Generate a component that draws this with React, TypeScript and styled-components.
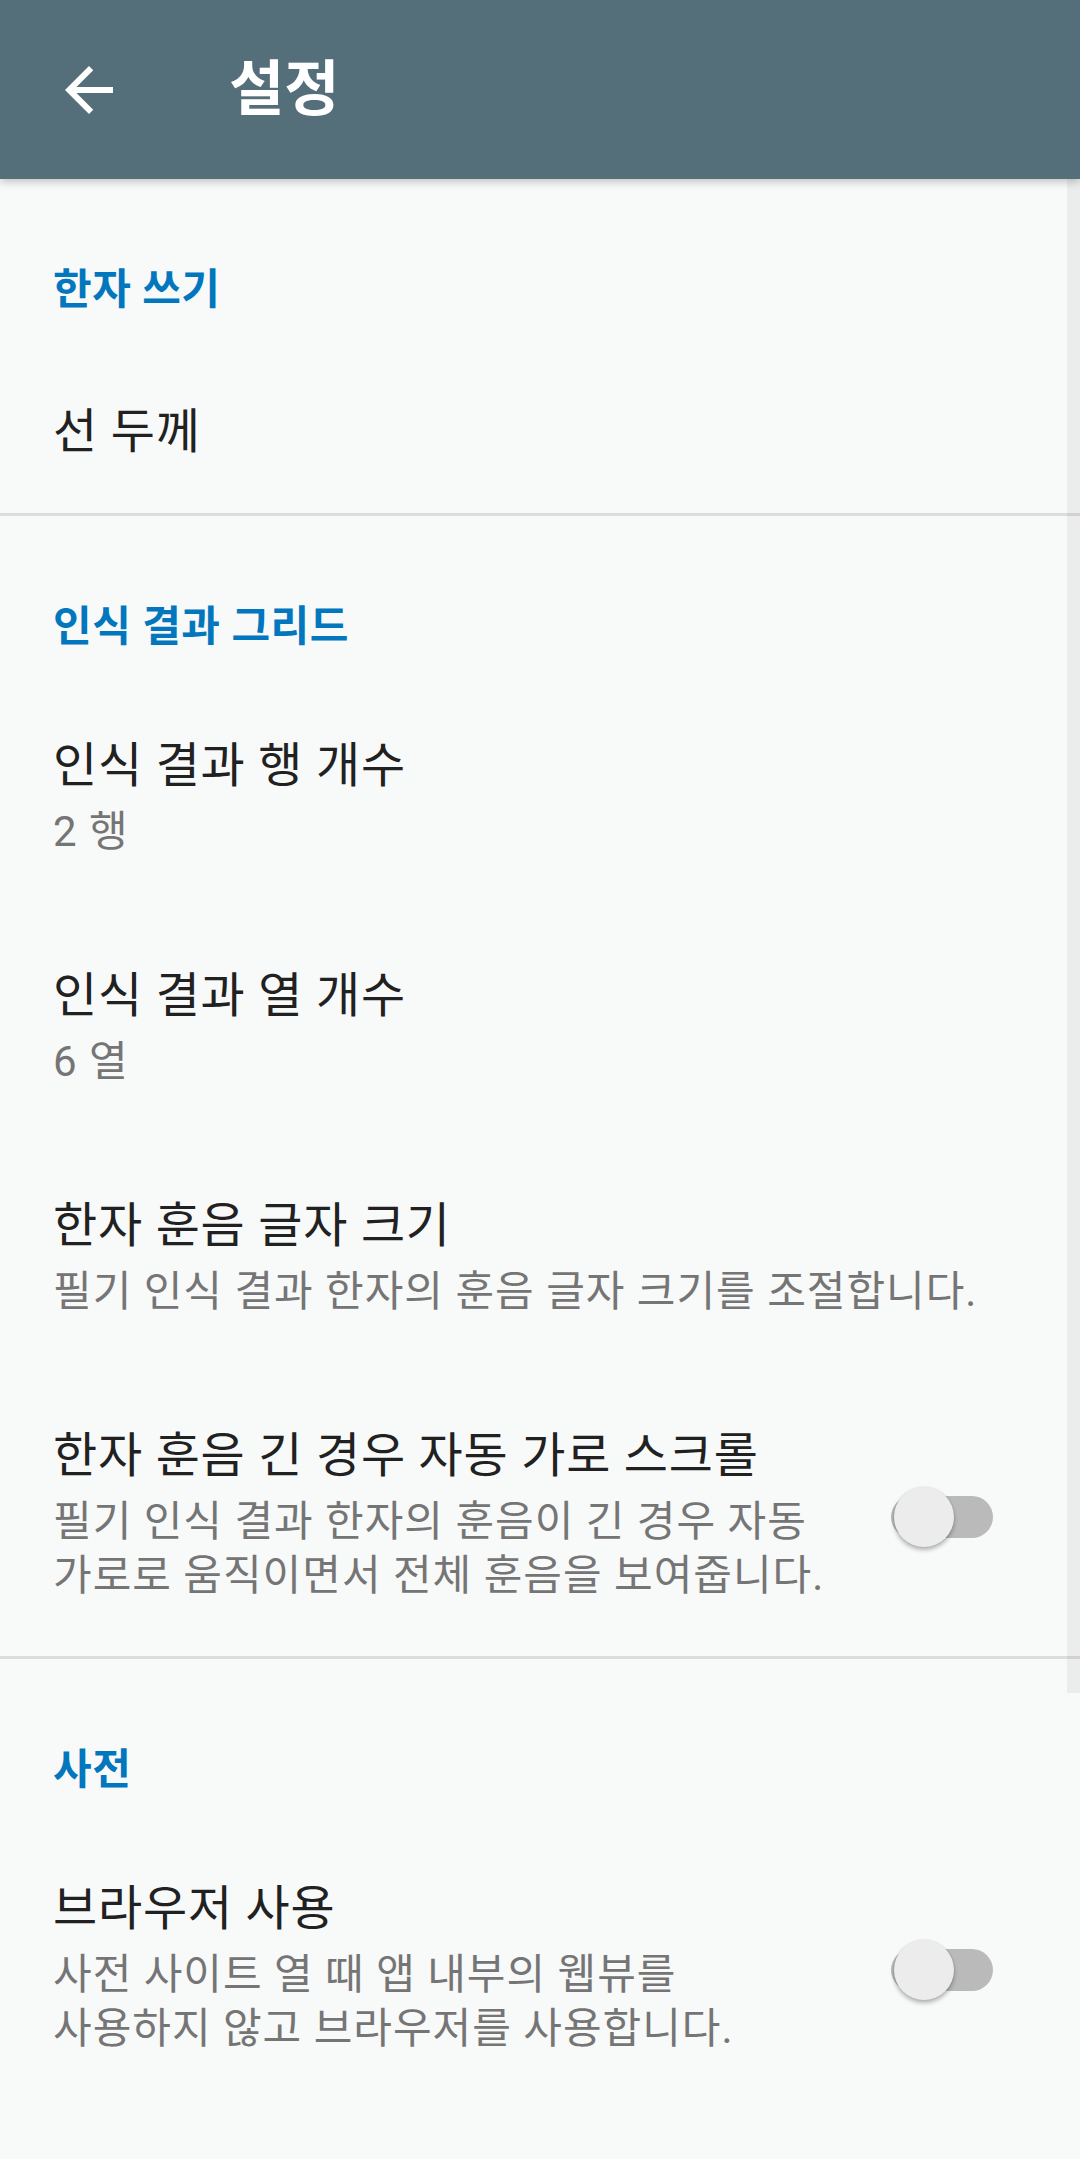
import React from "react";
import styled, { createGlobalStyle } from "styled-components";

const GlobalStyle = createGlobalStyle`
  html, body {
    margin: 0;
    padding: 0;
    background: #f8f9f9;
  }
  body {
    font-family: Roboto, "Noto Sans CJK KR", "Noto Sans", sans-serif;
    -webkit-font-smoothing: antialiased;
  }
  * { box-sizing: border-box; }
`;

const Page = styled.div`
  width: 1080px;
  min-height: 2159px;
  background: #f8f9f9;
  display: flex;
  flex-direction: column;
`;

const AppBar = styled.header`
  position: relative;
  z-index: 2;
  height: 179px;
  background: #546e7a;
  display: flex;
  align-items: center;
  padding-left: 53px;
  box-shadow: 0 3px 8px rgba(0, 0, 0, 0.22);
`;

const NavButton = styled.button`
  width: 72px;
  height: 72px;
  border: 0;
  padding: 0;
  background: transparent;
  display: flex;
  align-items: center;
  justify-content: center;
  color: #ffffff;
`;

const Title = styled.h1`
  margin: 0 0 0 104px;
  font-size: 60px;
  line-height: 72px;
  font-weight: 700;
  color: #ffffff;
`;

const Content = styled.main`
  position: relative;
  display: flex;
  flex-direction: column;
`;

const ScrollTrack = styled.div`
  position: absolute;
  top: 0;
  right: 0;
  width: 13px;
  height: 1514px;
  background: rgba(0, 0, 0, 0.05);
`;

const Category = styled.h2`
  margin: 0;
  padding: 83px 48px 27px 53px;
  font-size: 42px;
  line-height: 56px;
  font-weight: 700;
  letter-spacing: 0.5px;
  color: #0277bd;
`;

const Divider = styled.div`
  height: 3px;
  background: #dddddd;
`;

const Row = styled.div`
  min-height: 168px;
  display: flex;
  align-items: center;
  padding: 59px 87px 53px 53px;
`;

const TextCol = styled.div`
  flex: 1;
  display: flex;
  flex-direction: column;
`;

const ItemTitle = styled.div`
  font-size: 48px;
  line-height: 50px;
  letter-spacing: 0.8px;
  color: #212121;
  white-space: nowrap;
`;

const Summary = styled.div`
  margin-top: 14px;
  font-size: 42px;
  line-height: 54px;
  letter-spacing: 1px;
  color: #757575;
  white-space: nowrap;
`;

const SwitchTrack = styled.div`
  position: relative;
  width: 102px;
  height: 42px;
  border-radius: 21px;
  background: #bababa;
  flex-shrink: 0;
`;

const SwitchThumb = styled.div`
  position: absolute;
  left: 3px;
  top: -9px;
  width: 60px;
  height: 60px;
  border-radius: 50%;
  background: #ececec;
  box-shadow: 0 3px 4px rgba(0, 0, 0, 0.28), 0 0 2px rgba(0, 0, 0, 0.12);
`;

const BackArrow = () => (
  <svg width="72" height="72" viewBox="0 0 24 24" fill="currentColor">
    <path d="M20 11H7.83l5.59-5.59L12 4l-8 8 8 8 1.41-1.41L7.83 13H20v-2z" />
  </svg>
);

type Pref = {
  title: string;
  summary?: string[];
  toggle?: boolean;
};

const Preference = ({ title, summary, toggle }: Pref) => (
  <Row>
    <TextCol>
      <ItemTitle>{title}</ItemTitle>
      {summary && (
        <Summary>
          {summary.map((line, i) => (
            <React.Fragment key={i}>
              {i > 0 && <br />}
              {line}
            </React.Fragment>
          ))}
        </Summary>
      )}
    </TextCol>
    {toggle && (
      <SwitchTrack role="switch" aria-checked="false">
        <SwitchThumb />
      </SwitchTrack>
    )}
  </Row>
);

export default function App() {
  return (
    <>
      <GlobalStyle />
      <Page>
        <AppBar>
          <NavButton aria-label="뒤로">
            <BackArrow />
          </NavButton>
          <Title>설정</Title>
        </AppBar>
        <Content>
          <ScrollTrack />
          <Category>한자 쓰기</Category>
          <Preference title="선 두께" />
          <Divider />
          <Category>인식 결과 그리드</Category>
          <Preference title="인식 결과 행 개수" summary={["2 행"]} />
          <Preference title="인식 결과 열 개수" summary={["6 열"]} />
          <Preference
            title="한자 훈음 글자 크기"
            summary={["필기 인식 결과 한자의 훈음 글자 크기를 조절합니다."]}
          />
          <Preference
            title="한자 훈음 긴 경우 자동 가로 스크롤"
            summary={[
              "필기 인식 결과 한자의 훈음이 긴 경우 자동",
              "가로로 움직이면서 전체 훈음을 보여줍니다.",
            ]}
            toggle
          />
          <Divider />
          <Category>사전</Category>
          <Preference
            title="브라우저 사용"
            summary={[
              "사전 사이트 열 때 앱 내부의 웹뷰를",
              "사용하지 않고 브라우저를 사용합니다.",
            ]}
            toggle
          />
        </Content>
      </Page>
    </>
  );
}
